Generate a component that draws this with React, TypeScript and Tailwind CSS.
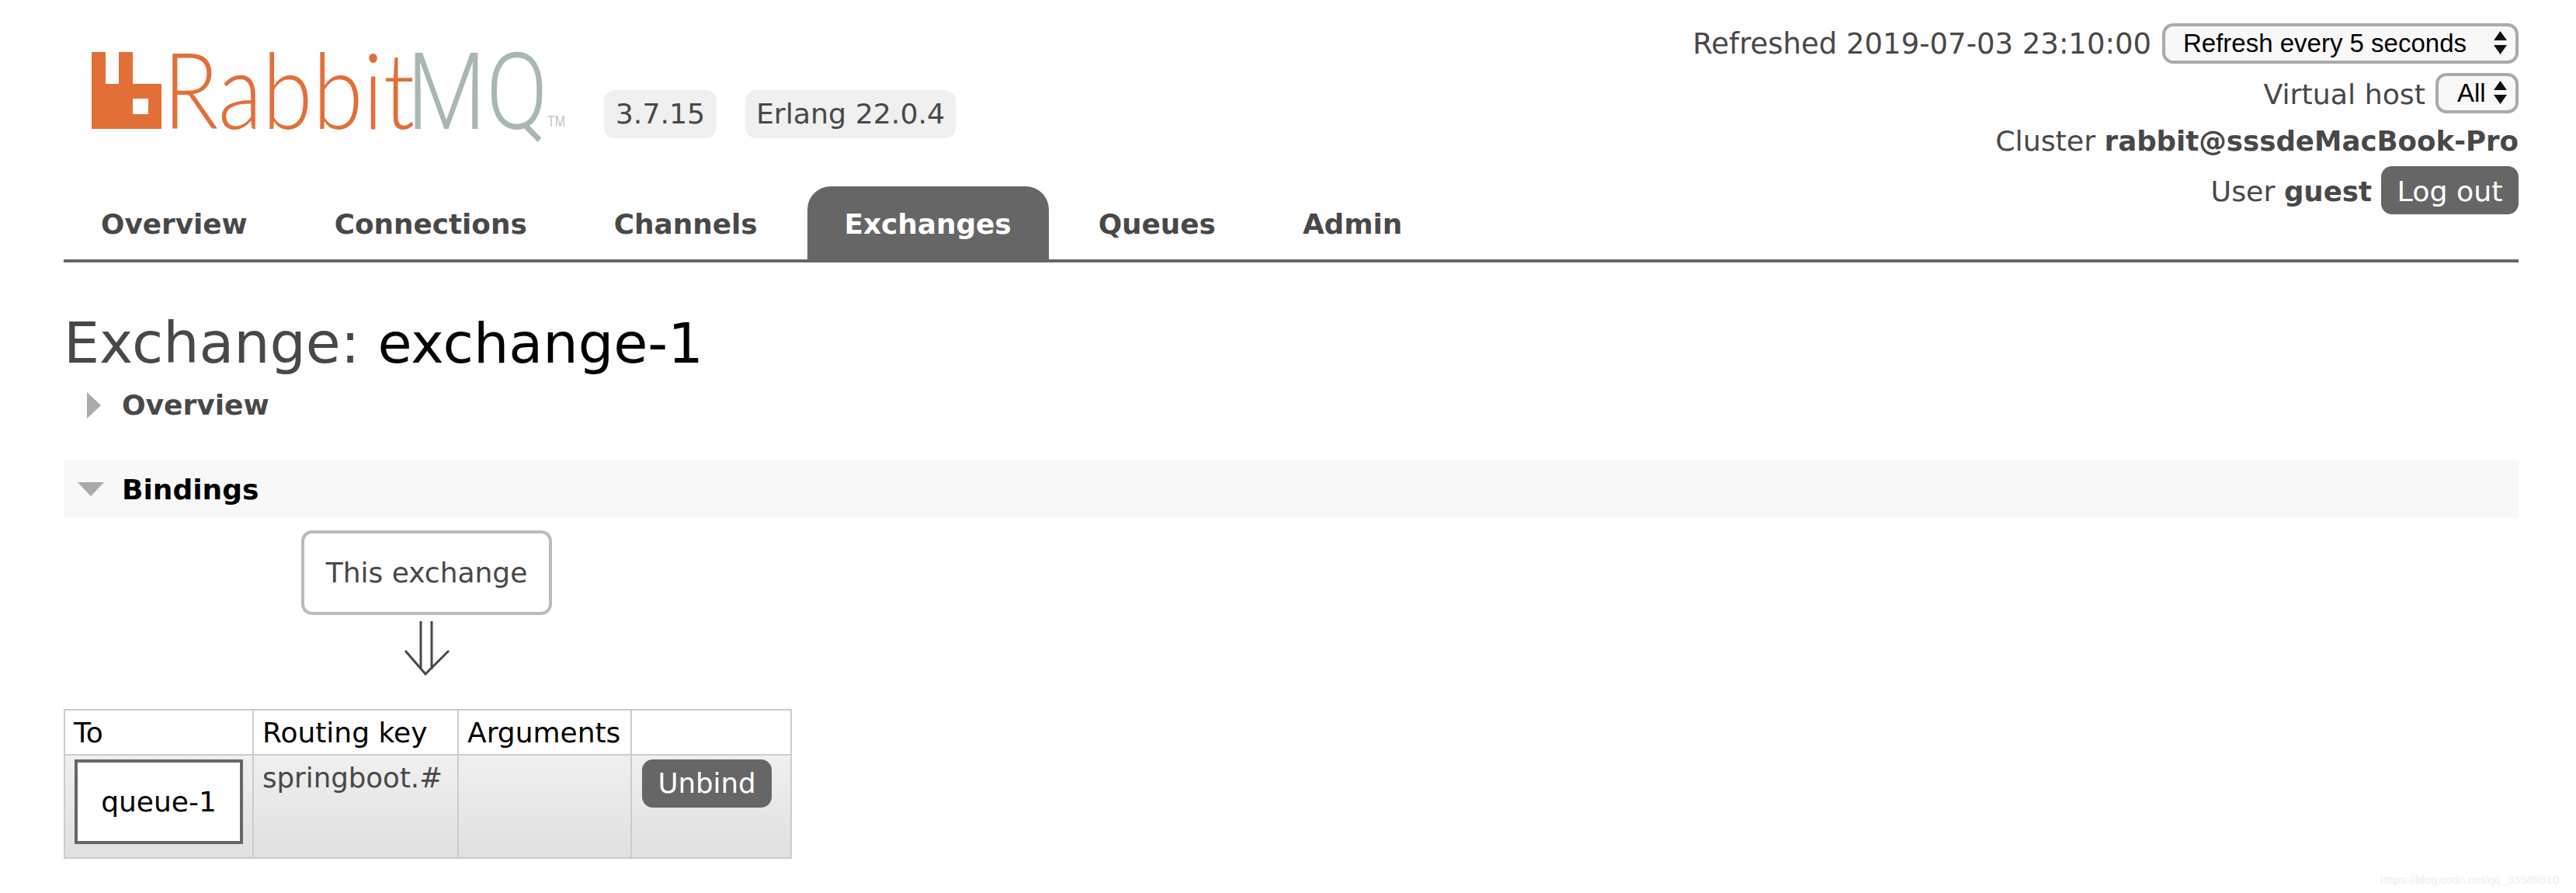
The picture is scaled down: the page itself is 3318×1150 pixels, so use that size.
const tabs = ["Overview", "Connections", "Channels", "Exchanges", "Queues", "Admin"];

function SelectArrows() {
  return (
    <svg width="17" height="30" viewBox="0 0 17 30" className="absolute right-[15px] top-[10px] pointer-events-none">
      <path d="M8.5 0 L17 12 H0 Z M8.5 30 L17 18 H0 Z" fill="#111" />
    </svg>
  );
}

function Logo() {
  return (
    <div className="flex items-start h-[100px] w-[610px]">
      <svg width="90" height="99" viewBox="0 0 90 99" className="shrink-0">
        <path
          fillRule="evenodd"
          fill="#e36f38"
          d="M0 0 H18 V41 H35 V0 H53 V41 H90 V99 H0 Z M53 60 V80 H73 V60 Z"
        />
      </svg>
      <div className="flex items-baseline ml-[2px] h-[100px] font-light text-[137px] leading-[92px] whitespace-nowrap">
        <span className="block w-[314px] shrink-0 origin-left scale-x-[0.86] font-['Lato',sans-serif] text-[#e36f38]">Rabbit</span>
        <span className="block w-[179px] shrink-0 origin-left scale-x-[0.86] font-['Roboto',sans-serif] text-[#a9b7b2]">MQ</span>
      </div>
      <span className="mt-[79px] ml-[2px] origin-left scale-x-[0.8] font-['Liberation_Sans',sans-serif] text-[20px] leading-[20px] text-[#c0c6c3]">TM</span>
    </div>
  );
}

export default function App() {
  return (
    <div className="relative min-h-[1150px] bg-white pl-[82px] pr-[74px] font-['DejaVu_Sans',sans-serif] text-[36.3px] leading-[44px] text-[#484848] overflow-hidden">
      <div className="flex justify-between h-[240px]">
        <div className="flex items-start pt-[67px] pl-[36px]">
          <Logo />
          <span className="ml-[50px] mt-[49px] h-[62px] w-[145px] flex items-center justify-center rounded-[14px] bg-[#f0f0f0]">3.7.15</span>
          <span className="ml-[37px] mt-[49px] h-[62px] w-[271px] flex items-center justify-center rounded-[14px] bg-[#f0f0f0]">Erlang 22.0.4</span>
        </div>
        <div className="flex flex-col items-end pt-[30px]">
          <div className="flex items-center h-[52px] gap-[14px]">
            <span className="text-[37px] pt-[1px]">Refreshed 2019-07-03 23:10:00</span>
            <div className="relative">
              <select className="appearance-none block w-[459px] h-[52px] pl-[23px] border-[4px] border-[#aaa] rounded-[14px] bg-[#f8f8f8] text-black font-['Liberation_Sans',sans-serif] text-[33px]">
                <option>Refresh every 5 seconds</option>
              </select>
              <SelectArrows />
            </div>
          </div>
          <div className="flex items-center h-[52px] gap-[13px] mt-[12px]">
            <span className="pt-[3px]">Virtual host</span>
            <div className="relative">
              <select className="appearance-none block w-[107px] h-[52px] pl-[24px] border-[4px] border-[#aaa] rounded-[14px] bg-[#f8f8f8] text-black font-['Liberation_Sans',sans-serif] text-[33px]">
                <option>All</option>
              </select>
              <SelectArrows />
            </div>
          </div>
          <div className="h-[44px] mt-[14px] mb-[-2px]">
            Cluster <b className="text-[35.6px]">rabbit@sssdeMacBook-Pro</b>
          </div>
          <div className="flex items-center h-[62px] gap-[12px] mt-[12px]">
            <span className="pt-[3px]">
              User <b className="text-[35.6px]">guest</b>
            </span>
            <button className="h-[62px] w-[177px] pt-[3px] rounded-[14px] bg-[#666] text-white">Log out</button>
          </div>
        </div>
      </div>

      <nav className="flex gap-[16px] h-[98px] border-b-[4px] border-[#666]">
        {tabs.map((tab) => (
          <a
            key={tab}
            className={`px-[48px] pt-[4px] flex items-center text-[35.8px] font-bold rounded-t-[30px] ${
              tab === "Exchanges" ? "bg-[#666] text-white" : "text-[#484848]"
            }`}
          >
            {tab}
          </a>
        ))}
      </nav>

      <h1 className="mt-[62px] text-[73px] leading-[84px]">
        Exchange: <span className="text-[71.7px] text-black">exchange-1</span>
      </h1>

      <div className="flex items-center h-[44px] mt-[16px] pl-[30px]">
        <svg width="18" height="34" viewBox="0 0 18 34" className="shrink-0">
          <path d="M0 0 L18 17 L0 34 Z" fill="#aaa" />
        </svg>
        <span className="ml-[27px] text-[36px] font-bold">Overview</span>
      </div>

      <div className="flex items-center h-[74px] mt-[49px] pl-[18px] bg-[#f8f8f8]">
        <svg width="34" height="18" viewBox="0 0 34 18" className="shrink-0">
          <path d="M0 0 H34 L17 18 Z" fill="#aaa" />
        </svg>
        <span className="ml-[23px] pt-[2px] text-[36px] font-bold text-black">Bindings</span>
      </div>

      <div className="flex flex-col items-center w-[323px] ml-[306px] mt-[16px]">
        <div className="flex items-center justify-center w-[323px] h-[109px] border-[4px] border-[#bbb] rounded-[14px] text-[36px]">This exchange</div>
        <svg width="60" height="70" viewBox="0 0 60 70" className="mt-[8px]" fill="none" stroke="#484848" strokeWidth="3">
          <path d="M22 0 V62 M36 0 V62 M2 38 L28 68 L58 38" />
        </svg>
      </div>

      <table className="mt-[43px] w-[938px] table-fixed border-collapse border-[2px] border-[#ccc] text-black text-[36px]">
        <colgroup>
          <col className="w-[243px]" />
          <col className="w-[264px]" />
          <col className="w-[223px]" />
          <col />
        </colgroup>
        <thead>
          <tr className="h-[58px]">
            <th className="border-[2px] border-[#ccc] pl-[11px] pt-[1px] text-left font-normal">To</th>
            <th className="border-[2px] border-[#ccc] pl-[11px] pt-[1px] text-left font-normal">Routing key</th>
            <th className="border-[2px] border-[#ccc] pl-[11px] pt-[1px] text-left font-normal">Arguments</th>
            <th className="border-[2px] border-[#ccc]"></th>
          </tr>
        </thead>
        <tbody>
          <tr className="h-[133px] bg-gradient-to-b from-[#f0f0f0] to-[#e0e0e0] align-top">
            <td className="border-[2px] border-[#ccc] pl-[12px] pt-[5px]">
              <div className="flex items-center justify-center w-[217px] h-[109px] border-[4px] border-[#666] bg-white">queue-1</div>
            </td>
            <td className="border-[2px] border-[#ccc] pl-[11px] pt-[7px] text-[35.6px] text-[#484848]">springboot.#</td>
            <td className="border-[2px] border-[#ccc]"></td>
            <td className="border-[2px] border-[#ccc] pl-[13px] pt-[5px]">
              <button className="block h-[62px] w-[167px] rounded-[14px] bg-[#666] text-[35.6px] text-white">Unbind</button>
            </td>
          </tr>
        </tbody>
      </table>

      <span className="absolute left-[3066px] top-[1123px] font-['Liberation_Sans',sans-serif] text-[15px] leading-[20px] text-[#eeeeee]">
        https://blog.csdn.net/qq_33589510
      </span>
    </div>
  );
}
